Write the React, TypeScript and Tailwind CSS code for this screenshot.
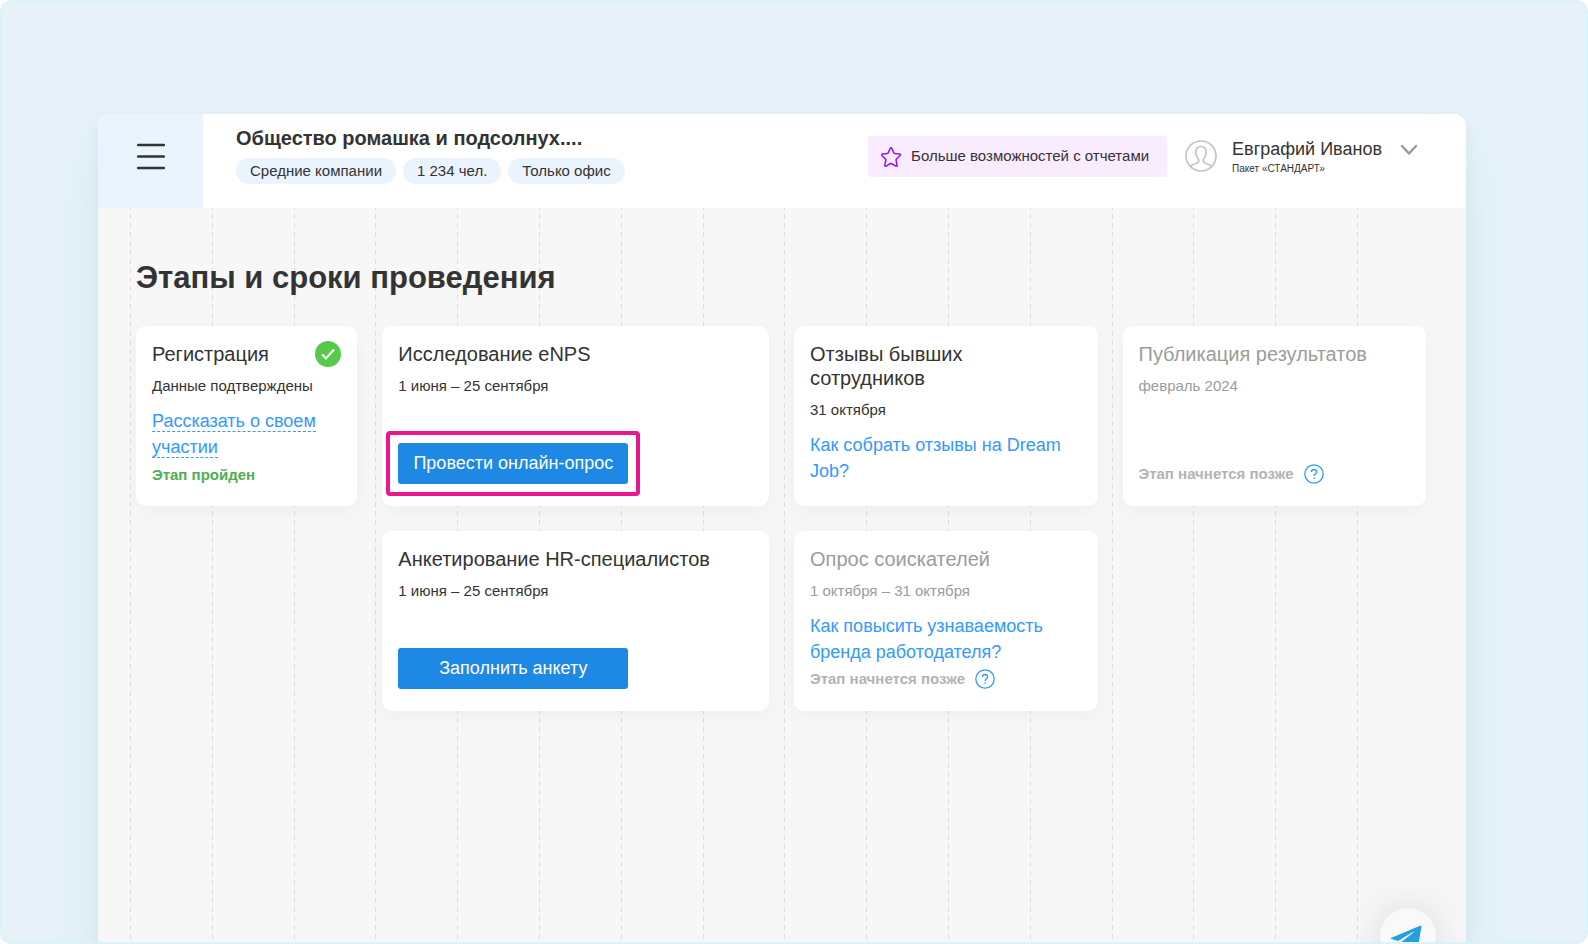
import type { ReactNode } from "react"
import clsx from "clsx"

const tags = ["Средние компании", "1 234 чел.", "Только офис"]

interface StageCardProps {
  title: string
  date: string
  muted?: boolean
  done?: boolean
  className?: string
  children: ReactNode
}

function StageCard({ title, date, muted, done, className, children }: StageCardProps) {
  return (
    <article
      className={clsx(
        "flex min-h-[180px] flex-col rounded-[10px] bg-white px-4 pt-4 pb-[22px] shadow-[0_5px_20px_rgba(0,0,0,0.04)]",
        muted ? "text-[#9c9c9c]" : "text-[#333333]",
        className,
      )}
    >
      <div className="flex items-start justify-between">
        <h2 className="text-[20px] leading-6">{title}</h2>
        {done && <CheckIcon />}
      </div>
      <p className="mt-2 text-[15px] leading-6">{date}</p>
      {children}
    </article>
  )
}

function StageLink({ children, dashed }: { children: ReactNode; dashed?: boolean }) {
  return (
    <p className="mt-[10px] text-[18px] leading-[26px]">
      <a href="#" className={clsx("text-[#3399ff]", dashed && "border-b border-dashed border-[#3399ff]")}>
        {children}
      </a>
    </p>
  )
}

function LaterNote() {
  return (
    <div className="mt-auto flex items-center gap-[10px] text-[15px] leading-5 font-bold text-[#b3b3b3]">
      <span>Этап начнется позже</span>
      <button type="button" aria-label="Подсказка">
        <QuestionIcon />
      </button>
    </div>
  )
}

function StageButton({ children }: { children: ReactNode }) {
  return (
    <button type="button" className="h-[41px] w-[230px] rounded-[3px] bg-[#1e88e5] text-[18px] text-white">
      {children}
    </button>
  )
}

function CheckIcon() {
  return (
    <svg className="-my-px" width="26" height="26" viewBox="0 0 26 26" fill="none">
      <circle cx="13" cy="13" r="13" fill="#56cb4b" />
      <path d="M7.2 13.6 10.9 17.4 19 8.4" stroke="#fff" strokeWidth="2.2" />
    </svg>
  )
}

function QuestionIcon() {
  return (
    <svg width="20" height="20" viewBox="0 0 20 20" fill="none" stroke="#3399ff" strokeWidth="1.3">
      <circle cx="10" cy="10" r="9.2" />
      <path d="M7.4 8.1C7.4 6.5 8.5 5.5 10 5.5s2.6 1 2.6 2.4c0 1.9-2.5 2-2.5 4.2" />
      <path d="M10.1 13.4v1.5" />
    </svg>
  )
}

function StarIcon() {
  return (
    <svg width="20" height="20" viewBox="0 0 20 20" fill="none" stroke="#9013fe" strokeWidth="1.5" strokeLinejoin="round">
      <path d="M9.3 1.2c.3-.7 1.1-.7 1.4 0l2.2 4.9c.1.3.4.5.7.5l5 .4c.8.1 1.1 1 .5 1.5l-3.8 3.7c-.2.2-.3.5-.3.8l1.1 5.3c.2.8-.6 1.3-1.3.9l-4.4-2.7c-.3-.2-.6-.2-.9 0l-4.4 2.7c-.7.4-1.4-.1-1.3-.9l1.1-5.3c.1-.3 0-.6-.3-.8L.9 8.5C.3 8 .6 7.1 1.4 7l5-.4c.3 0 .6-.2.7-.5z" />
    </svg>
  )
}

function AvatarIcon() {
  return (
    <svg width="32" height="32" viewBox="0 0 32 32" fill="none" stroke="#c4c4c4" strokeWidth="1.7">
      <circle cx="16" cy="16" r="15" />
      <path d="M5.5 26.5c1-1.5 3-2.2 5.5-3 2-.7 2.8-1.5 2.8-3 0-1.2-.5-2-1.2-2.8-.9-1-1.6-2.7-1.8-5.2-.3-3.8 1.7-6 5.2-6s5.500 2.200 5.200 6c-.2 2.500-.9 4.200-1.800 5.200-.7.8-1.200 1.600-1.200 2.800 0 1.500.8 2.300 2.800 3 2.500.8 4.500 1.500 5.500 3" />
    </svg>
  )
}

function GridLines() {
  return (
    <div aria-hidden="true" className="absolute inset-y-0 right-[108px] left-8 flex justify-between">
      {Array.from({ length: 16 }, (_, i) => (
        <span
          key={i}
          className="w-px bg-[repeating-linear-gradient(to_bottom,#dcdcdc_0_2px,transparent_2px_6px,#dcdcdc_6px_9px)]"
        />
      ))}
    </div>
  )
}

function Header() {
  return (
    <header className="flex h-[94px] bg-white">
      <button type="button" aria-label="Меню" className="flex w-[105px] items-start justify-center bg-[#e9f4ff] pt-[29px]">
        <svg width="28" height="28" viewBox="0 0 28 28" stroke="#333" strokeWidth="2.5" strokeLinecap="round">
          <path d="M1 2h26M1 13.5h26M1 25h26" />
        </svg>
      </button>
      <div className="flex flex-1 items-start justify-between pr-12 pl-[33px]">
        <div className="pt-3">
          <h1 className="text-[20px] leading-6 font-bold">Общество ромашка и подсолнух....</h1>
          <ul className="mt-2 flex gap-[7px]">
            {tags.map((tag) => (
              <li key={tag} className="rounded-full bg-[#e9f4ff] px-[14px] text-[15px] leading-[26px]">
                {tag}
              </li>
            ))}
          </ul>
        </div>
        <div className="flex items-start pt-[22px]">
          <a href="#" className="flex h-[41px] items-center gap-[10px] rounded-[3px] bg-[#f9ecff] pr-[18px] pl-[13px] text-[15px]">
            <StarIcon />
            Больше возможностей с отчетами
          </a>
          <button type="button" className="ml-[18px] flex items-start text-left">
            <span className="mt-1">
              <AvatarIcon />
            </span>
            <span className="ml-[15px] flex flex-col">
              <span className="mt-px text-[18px] leading-6">Евграфий Иванов</span>
              <span className="text-[10px] leading-4">Пакет «СТАНДАРТ»</span>
            </span>
            <svg className="mt-2 ml-[18px]" width="18" height="12" viewBox="0 0 18 12" fill="none" stroke="#999" strokeWidth="2.4" strokeLinecap="round" strokeLinejoin="round">
              <path d="M2 2l7 7.5L16 2" />
            </svg>
          </button>
        </div>
      </div>
    </header>
  )
}

export default function App() {
  return (
    <div className="h-screen bg-white font-['Liberation_Sans',Arial,sans-serif] text-[#333333]">
      <div className="flex h-full flex-col overflow-hidden rounded-xl border-2 border-[#daf2fa] bg-[#e6f2f8] pt-28 pr-[120px] pl-24">
        <div className="flex flex-1 flex-col rounded-t-xl shadow-[0_40px_50px_rgba(190,222,236,0.4),0_6px_14px_rgba(190,214,236,0.35)]">
          <div className="relative flex flex-1 flex-col overflow-hidden rounded-t-xl bg-[#f7f7f7]">
            <Header />
            <main className="relative flex-1">
              <GridLines />
              <div className="relative pt-[50px] pr-10 pl-[38px]">
                <h2 className="text-[31px] leading-10 font-bold">Этапы и сроки проведения</h2>
                <div className="mt-7 grid grid-cols-[221fr_386fr_303fr_303fr] gap-[25px]">
                  <StageCard title="Регистрация" date="Данные подтверждены" done>
                    <StageLink dashed>Рассказать о своем участии</StageLink>
                    <p className="mt-[7px] text-[15px] leading-4 font-bold text-[#4caf50]">Этап пройден</p>
                  </StageCard>
                  <StageCard title="Исследование eNPS" date="1 июня – 25 сентября">
                    <div className="relative mt-auto self-start">
                      <StageButton>Провести онлайн-опрос</StageButton>
                      <span className="pointer-events-none absolute -inset-3 rounded border-4 border-[#ec168c]" />
                    </div>
                  </StageCard>
                  <StageCard title="Отзывы бывших сотрудников" date="31 октября">
                    <StageLink>Как собрать отзывы на Dream Job?</StageLink>
                  </StageCard>
                  <StageCard title="Публикация результатов" date="февраль 2024" muted>
                    <LaterNote />
                  </StageCard>
                  <StageCard title="Анкетирование HR-специалистов" date="1 июня – 25 сентября" className="col-start-2">
                    <div className="mt-auto">
                      <StageButton>Заполнить анкету</StageButton>
                    </div>
                  </StageCard>
                  <StageCard title="Опрос соискателей" date="1 октября – 31 октября" muted>
                    <StageLink>Как повысить узнаваемость бренда работодателя?</StageLink>
                    <LaterNote />
                  </StageCard>
                </div>
              </div>
            </main>
            <a
              href="#"
              aria-label="Telegram"
              className="absolute right-[30px] -bottom-[22px] flex size-14 items-center justify-center rounded-full bg-[#f9f9f9] pt-1.5 pr-1 shadow-[0_0_40px_rgba(0,0,0,0.13)]"
            >
              <svg width="32" height="28" viewBox="0 0 32 28" fill="#289fdd">
                <path d="M1.5 12.8 29.5 1c1.2-.5 2.1.2 1.9 1.5L27.5 24.5c-.4 1.8-1.5 2.2-3 1.3l-7-5.2-3.5 3.4c-.6.6-1.2.5-1.4-.4L10.8 17.4 23.5 7.5c.5-.5 0-.9-.6-.4L8 16l-6.5-2c-1-.3-1-.8 0-1.2z" />
              </svg>
            </a>
          </div>
        </div>
      </div>
    </div>
  )
}
